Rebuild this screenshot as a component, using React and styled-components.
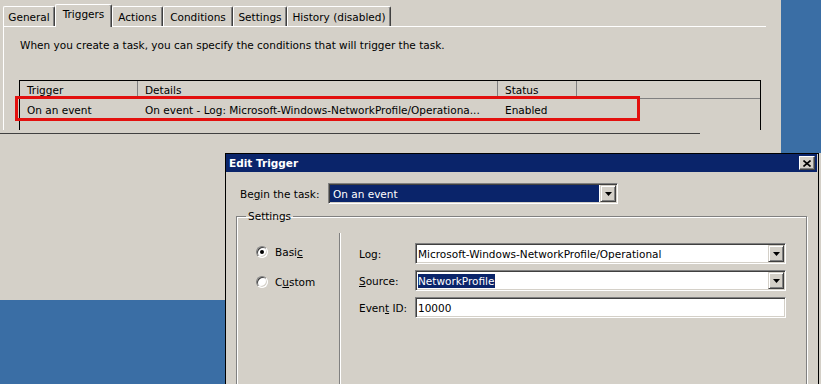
import styled, { createGlobalStyle } from "styled-components";

const GlobalStyle = createGlobalStyle`
  html, body {
    margin: 0;
    padding: 0;
  }
  body {
    font-family: "DejaVu Sans", "Liberation Sans", Arial, sans-serif;
    font-size: 10.5px;
    color: #000;
  }
`;

const Desktop = styled.div`
  position: relative;
  width: 821px;
  height: 384px;
  overflow: hidden;
  background: #3a6ea5;
`;

/* ---------- task properties window (behind) ---------- */

const BackWindow = styled.div`
  position: absolute;
  left: 0;
  top: 0;
  width: 781px;
  height: 300px;
  background: #d4d0c8;
`;

const TabStrip = styled.div`
  display: flex;
  align-items: flex-end;
  height: 26px;
  padding-left: 3px;
  box-sizing: border-box;
`;

const Tab = styled.div`
  position: relative;
  z-index: ${(p) => (p.$active ? 1 : 0)};
  box-sizing: border-box;
  width: ${(p) => p.$w}px;
  height: ${(p) => (p.$active ? 23 : 20)}px;
  margin-bottom: ${(p) => (p.$active ? -1 : 0)}px;
  padding-top: ${(p) => (p.$active ? 3 : 4)}px;
  text-align: center;
  white-space: nowrap;
  background: #d4d0c8;
  border-top: 1px solid #fff;
  border-left: 1px solid #fff;
  border-right: 1px solid #404040;
  border-radius: 2px 2px 0 0;
  box-shadow: inset -1px 0 0 #808080;
`;

const TabPanel = styled.div`
  width: 763px;
  margin-left: 3px;
  box-sizing: border-box;
  border-top: 1px solid #fff;
  border-left: 1px solid #fff;
  padding: 12px 0 0 15px;
`;

const Intro = styled.div`
  line-height: 13px;
  margin-left: 1px;
`;

const ListView = styled.div`
  width: 742px;
  height: 50px;
  margin-top: 28px;
  box-sizing: border-box;
  border: 1px solid #000;
  border-bottom: none;
`;

const ListRow = styled.div`
  display: grid;
  grid-template-columns: 118px 360px 79px 1fr;
  height: ${(p) => (p.$header ? 18 : 24)}px;
  box-sizing: border-box;
  border-bottom: ${(p) => (p.$header ? "1px solid #808080" : "none")};
`;

const Cell = styled.div`
  padding-left: 7px;
  line-height: ${(p) => (p.$header ? 18 : 23)}px;
  white-space: nowrap;
  overflow: hidden;
  border-right: ${(p) => (p.$header && !p.$last ? "1px solid #808080" : "none")};
`;

const BottomRule = styled.div`
  width: 700px;
  height: 1px;
  margin-top: 3px;
  background: #404040;
`;

const Highlight = styled.div`
  position: absolute;
  left: 15px;
  top: 96px;
  width: 625px;
  height: 25px;
  box-sizing: border-box;
  border: 3px solid #e3100e;
`;

/* ---------- Edit Trigger dialog ---------- */

const Dialog = styled.div`
  position: absolute;
  left: 225px;
  top: 153px;
  width: 594px;
  height: 240px;
  box-sizing: border-box;
  background: #d4d0c8;
  border: 1px solid #000;
  box-shadow: 2px 0 0 #d4d0c8;
`;

const TitleBar = styled.div`
  display: flex;
  align-items: center;
  justify-content: space-between;
  height: 18px;
  margin-right: 1px;
  padding: 0 2px 0 3px;
  background: #0a246a;
`;

const TitleText = styled.span`
  color: #fff;
  font-weight: bold;
`;

const CloseButton = styled.div`
  display: flex;
  align-items: center;
  justify-content: center;
  width: 16px;
  height: 14px;
  box-sizing: border-box;
  background: #d4d0c8;
  border: 1px solid;
  border-color: #fff #404040 #404040 #fff;
  box-shadow: inset -1px -1px 0 #808080;
`;

const DialogBody = styled.div`
  padding-top: 11px;
`;

const BeginRow = styled.div`
  display: flex;
  align-items: center;
  padding-left: 14px;
`;

const Label = styled.span`
  width: ${(p) => p.$w}px;
  flex-shrink: 0;
  white-space: nowrap;
`;

const Key = styled.u`
  text-decoration: underline;
`;

const Field = styled.div`
  display: flex;
  align-items: stretch;
  width: ${(p) => p.$w}px;
  height: 21px;
  box-sizing: border-box;
  background: #fff;
  border: 1px solid;
  border-color: #808080 #fff #fff #808080;
  box-shadow: inset 1px 1px 0 #404040, inset -1px -1px 0 #d4d0c8;
  padding: 1px;
`;

const Value = styled.div`
  flex: 1;
  display: flex;
  align-items: center;
  padding-left: ${(p) => (p.$selected ? 3 : 1)}px;
  margin-right: 1px;
  white-space: nowrap;
  overflow: hidden;
  background: ${(p) => (p.$selected ? "#0a246a" : "transparent")};
  color: ${(p) => (p.$selected ? "#fff" : "#000")};
`;

const Selection = styled.span`
  background: #0a246a;
  color: #fff;
  line-height: 14px;
`;

const DropButton = styled.div`
  display: flex;
  align-items: center;
  justify-content: center;
  width: 16px;
  box-sizing: border-box;
  background: #d4d0c8;
  border: 1px solid;
  border-color: #d4d0c8 #404040 #404040 #d4d0c8;
  box-shadow: inset 1px 1px 0 #fff, inset -1px -1px 0 #808080;
`;

const GroupBox = styled.fieldset`
  height: 200px;
  margin: 6px 11px 0 10px;
  padding: 0;
  box-sizing: border-box;
  display: flex;
  border: 1px solid #808080;
  box-shadow: inset 1px 1px 0 #fff, 1px 1px 0 #fff;
`;

const Legend = styled.legend`
  margin-left: 9px;
  padding: 0 2px;
  line-height: 13px;
`;

const Inner = styled.div`
  display: flex;
  width: 100%;
`;

const RadioColumn = styled.div`
  display: flex;
  flex-direction: column;
  gap: 16px;
  width: 102px;
  flex-shrink: 0;
  padding: 22px 0 0 19px;
  box-sizing: border-box;
`;

const RadioRow = styled.label`
  display: flex;
  align-items: center;
  gap: 7px;
  height: 14px;
`;

const RadioDot = styled.span`
  position: relative;
  width: 12px;
  height: 12px;
  box-sizing: border-box;
  border-radius: 50%;
  background: #fff;
  border: 1px solid;
  border-color: #808080 #fff #fff #808080;
  box-shadow: inset 1px 1px 0 #404040, inset -1px -1px 0 #d4d0c8;

  &::after {
    content: "";
    display: ${(p) => (p.$checked ? "block" : "none")};
    position: absolute;
    left: 3px;
    top: 3px;
    width: 4px;
    height: 4px;
    border-radius: 50%;
    background: #000;
  }
`;

const FieldColumn = styled.div`
  display: flex;
  flex-direction: column;
  gap: 6px;
  flex: 1;
  margin-top: 10px;
  padding: 10px 0 0 19px;
  border-left: 1px solid #808080;
  box-shadow: inset 1px 0 0 #fff;
`;

const FieldRow = styled.div`
  display: flex;
  align-items: center;
`;

function Arrow() {
  return (
    <svg width="7" height="4" viewBox="0 0 7 4">
      <path d="M0 0h7L3.5 4z" fill="#000" />
    </svg>
  );
}

function Combo({ width, selected, children }) {
  return (
    <Field $w={width}>
      <Value $selected={selected}>{children}</Value>
      <DropButton>
        <Arrow />
      </DropButton>
    </Field>
  );
}

const tabs = [
  { name: "General", w: 52 },
  { name: "Triggers", w: 57, active: true },
  { name: "Actions", w: 51 },
  { name: "Conditions", w: 70 },
  { name: "Settings", w: 54 },
  { name: "History (disabled)", w: 104 },
];

export default function App() {
  return (
    <>
      <GlobalStyle />
      <Desktop>
        <BackWindow>
          <TabStrip>
            {tabs.map((t) => (
              <Tab key={t.name} $w={t.w} $active={t.active}>
                {t.name}
              </Tab>
            ))}
          </TabStrip>
          <TabPanel>
            <Intro>
              When you create a task, you can specify the conditions that will
              trigger the task.
            </Intro>
            <ListView>
              <ListRow $header>
                <Cell $header>Trigger</Cell>
                <Cell $header>Details</Cell>
                <Cell $header>Status</Cell>
                <Cell $header $last />
              </ListRow>
              <ListRow>
                <Cell>On an event</Cell>
                <Cell>
                  On event - Log: Microsoft-Windows-NetworkProfile/Operationa...
                </Cell>
                <Cell>Enabled</Cell>
                <Cell />
              </ListRow>
            </ListView>
          </TabPanel>
          <BottomRule />
          <Highlight />
        </BackWindow>

        <Dialog>
          <TitleBar>
            <TitleText>Edit Trigger</TitleText>
            <CloseButton>
              <svg width="8" height="7" viewBox="0 0 8 7">
                <path
                  d="M0.5 0.5L7.5 6.5M7.5 0.5L0.5 6.5"
                  stroke="#000"
                  strokeWidth="1.6"
                />
              </svg>
            </CloseButton>
          </TitleBar>
          <DialogBody>
            <BeginRow>
              <Label $w={88}>
                Be<Key>g</Key>in the task:
              </Label>
              <Combo width={290} selected>
                On an event
              </Combo>
            </BeginRow>
            <GroupBox>
              <Legend>Settings</Legend>
              <Inner>
                <RadioColumn>
                  <RadioRow>
                    <RadioDot $checked />
                    <span>
                      Basi<Key>c</Key>
                    </span>
                  </RadioRow>
                  <RadioRow>
                    <RadioDot />
                    <span>
                      C<Key>u</Key>stom
                    </span>
                  </RadioRow>
                </RadioColumn>
                <FieldColumn>
                  <FieldRow>
                    <Label $w={56}>
                      Lo<Key>g</Key>:
                    </Label>
                    <Combo width={371}>
                      Microsoft-Windows-NetworkProfile/Operational
                    </Combo>
                  </FieldRow>
                  <FieldRow>
                    <Label $w={56}>
                      <Key>S</Key>ource:
                    </Label>
                    <Combo width={371}>
                      <Selection>NetworkProfile</Selection>
                    </Combo>
                  </FieldRow>
                  <FieldRow>
                    <Label $w={56}>
                      Even<Key>t</Key> ID:
                    </Label>
                    <Field $w={371}>
                      <Value>10000</Value>
                    </Field>
                  </FieldRow>
                </FieldColumn>
              </Inner>
            </GroupBox>
          </DialogBody>
        </Dialog>
      </Desktop>
    </>
  );
}
